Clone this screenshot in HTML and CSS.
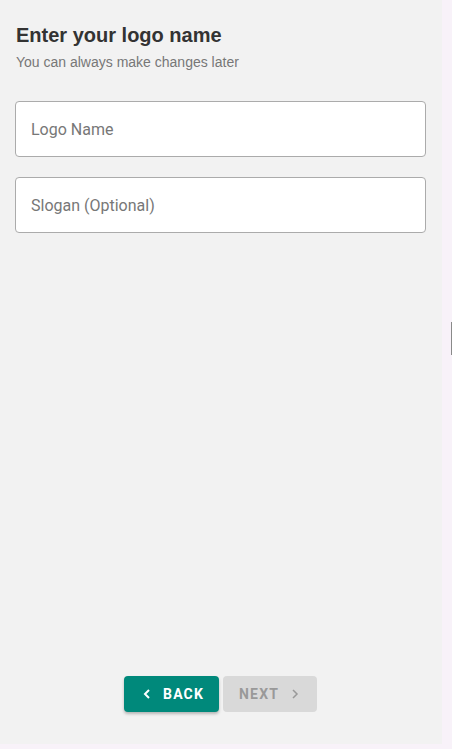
FILE: index.html
```html
<!DOCTYPE html>
<html lang="en">
<head>
<meta charset="utf-8">
<link rel="stylesheet" href="styles.css">
</head>
<body>
<div class="page">
  <main class="panel">
    <header class="intro">
      <h1 class="title">Enter your logo name</h1>
      <p class="subtitle">You can always make changes later</p>
    </header>
    <form class="fields">
      <input class="field" type="text" placeholder="Logo Name">
      <input class="field" type="text" placeholder="Slogan (Optional)">
    </form>
    <nav class="actions">
      <button class="btn btn-back" type="button">
        <svg class="chev" width="8" height="10" viewBox="0 0 8 10"><path d="M6 1 L2 5 L6 9" fill="none" stroke="currentColor" stroke-width="2"/></svg>
        <span>BACK</span>
      </button>
      <button class="btn btn-next" type="button" disabled>
        <span>NEXT</span>
        <svg class="chev" width="8" height="10" viewBox="0 0 8 10"><path d="M2 1 L6 5 L2 9" fill="none" stroke="currentColor" stroke-width="1.5"/></svg>
      </button>
    </nav>
  </main>
  <div class="side"><span class="handle"></span></div>
</div>
</body>
</html>
```
FILE: styles.css
```css
* { box-sizing: border-box; }
html, body { margin: 0; padding: 0; }
body {
  width: 452px;
  height: 749px;
  overflow: hidden;
  background: #f8f2f9;
  font-family: "Liberation Sans", Arial, sans-serif;
}
.page {
  display: flex;
  height: 749px;
}
.panel {
  width: 442px;
  height: 744px;
  background: #f2f2f2;
  display: flex;
  flex-direction: column;
  padding: 22px 16px 32px 15px;
}
.intro { padding-left: 1px; }
.title {
  margin: 0;
  font-size: 20px;
  line-height: 26px;
  font-weight: bold;
  color: #333;
}
.subtitle {
  margin: 5px 0 0;
  font-size: 14px;
  line-height: 18px;
  color: #777;
}
.fields {
  margin: 30px 0 0;
  display: flex;
  flex-direction: column;
  gap: 20px;
}
.field {
  width: 411px;
  height: 56px;
  border: 1px solid #ababab;
  border-radius: 4px;
  background: #fff;
  padding: 0 15px;
  font-family: Roboto, sans-serif;
  font-size: 16px;
  color: #333;
  outline: none;
}
.field::placeholder { color: #777; }
.actions {
  margin-top: auto;
  display: flex;
  justify-content: center;
  gap: 4px;
}
.btn {
  height: 36px;
  border: none;
  border-radius: 4px;
  font-family: Roboto, sans-serif;
  font-weight: bold;
  font-size: 14px;
  letter-spacing: 1.2px;
  display: flex;
  align-items: center;
  gap: 12px;
}
.btn-back {
  width: 95px;
  background: #00897b;
  color: #fff;
  padding: 0 0 0 19px;
  box-shadow: 0 2px 3px rgba(0,0,0,0.25);
}
.btn-next {
  width: 94px;
  background: #d9d9d9;
  color: #999;
  padding: 0 0 0 16px;
}
.side {
  flex: 1;
  position: relative;
}
.handle {
  position: absolute;
  right: 0;
  top: 322px;
  width: 1px;
  height: 33px;
  background: #8a8a8a;
}
```
